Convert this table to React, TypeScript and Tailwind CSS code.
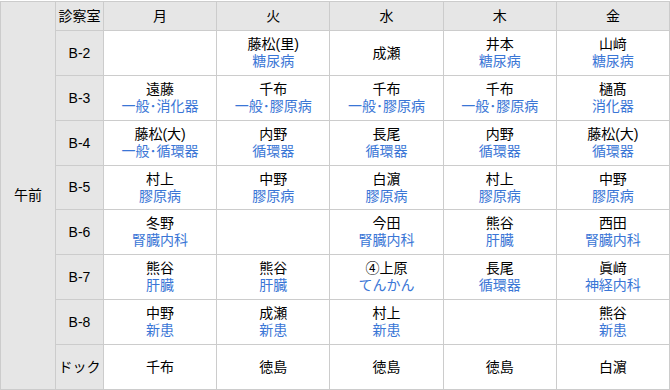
import React from "react";

type Cell = { n?: string; s?: string } | null;

const rows: { room: string; cells: Cell[] }[] = [
  { room: "B-2", cells: [null, { n: "藤松(里)", s: "糖尿病" }, { n: "成瀬" }, { n: "井本", s: "糖尿病" }, { n: "山﨑", s: "糖尿病" }] },
  { room: "B-3", cells: [{ n: "遠藤", s: "一般･消化器" }, { n: "千布", s: "一般･膠原病" }, { n: "千布", s: "一般･膠原病" }, { n: "千布", s: "一般･膠原病" }, { n: "樋髙", s: "消化器" }] },
  { room: "B-4", cells: [{ n: "藤松(大)", s: "一般･循環器" }, { n: "内野", s: "循環器" }, { n: "長尾", s: "循環器" }, { n: "内野", s: "循環器" }, { n: "藤松(大)", s: "循環器" }] },
  { room: "B-5", cells: [{ n: "村上", s: "膠原病" }, { n: "中野", s: "膠原病" }, { n: "白濵", s: "膠原病" }, { n: "村上", s: "膠原病" }, { n: "中野", s: "膠原病" }] },
  { room: "B-6", cells: [{ n: "冬野", s: "腎臓内科" }, null, { n: "今田", s: "腎臓内科" }, { n: "熊谷", s: "肝臓" }, { n: "西田", s: "腎臓内科" }] },
  { room: "B-7", cells: [{ n: "熊谷", s: "肝臓" }, { n: "熊谷", s: "肝臓" }, { n: "④上原", s: "てんかん" }, { n: "長尾", s: "循環器" }, { n: "眞﨑", s: "神経内科" }] },
  { room: "B-8", cells: [{ n: "中野", s: "新患" }, { n: "成瀬", s: "新患" }, { n: "村上", s: "新患" }, null, { n: "熊谷", s: "新患" }] },
  { room: "ドック", cells: [{ n: "千布" }, { n: "徳島" }, { n: "徳島" }, { n: "徳島" }, { n: "白濵" }] },
];

const days = ["月", "火", "水", "木", "金"];

export default function App() {
  return (
    <div
      className="w-[670px] h-[390px] bg-white pt-px text-[14px] leading-[17px] text-black font-normal"
      style={{ fontFamily: '"Liberation Sans", "Noto Sans CJK JP", sans-serif' }}
    >
      <table className="w-[670px] border-collapse table-fixed">
        <colgroup>
          <col className="w-[55px]" />
          <col className="w-[48px]" />
          <col />
          <col />
          <col />
          <col />
          <col />
        </colgroup>
        <tbody>
          <tr className="h-[29px]">
            <td rowSpan={9} className="border border-[#cccccc] bg-[#e6e6e6] text-center align-middle">
              午前
            </td>
            <td className="border border-[#cccccc] bg-[#e6e6e6] text-center">診察室</td>
            {days.map((d) => (
              <td key={d} className="border border-[#cccccc] bg-[#e6e6e6] text-center">
                {d}
              </td>
            ))}
          </tr>
          {rows.map((r, i) => (
            <tr key={r.room} className={i === 3 ? "h-[44px]" : "h-[45px]"}>
              <td className="border border-[#cccccc] bg-[#e6e6e6] text-center">{r.room}</td>
              {r.cells.map((c, j) => (
                <td key={j} className="border border-[#cccccc] bg-white text-center align-middle p-0">
                  {c && (
                    <div className="flex flex-col items-center">
                      <span>{c.n}</span>
                      {c.s && <span className="text-[#3a76d6]">{c.s}</span>}
                    </div>
                  )}
                </td>
              ))}
            </tr>
          ))}
        </tbody>
      </table>
    </div>
  );
}
